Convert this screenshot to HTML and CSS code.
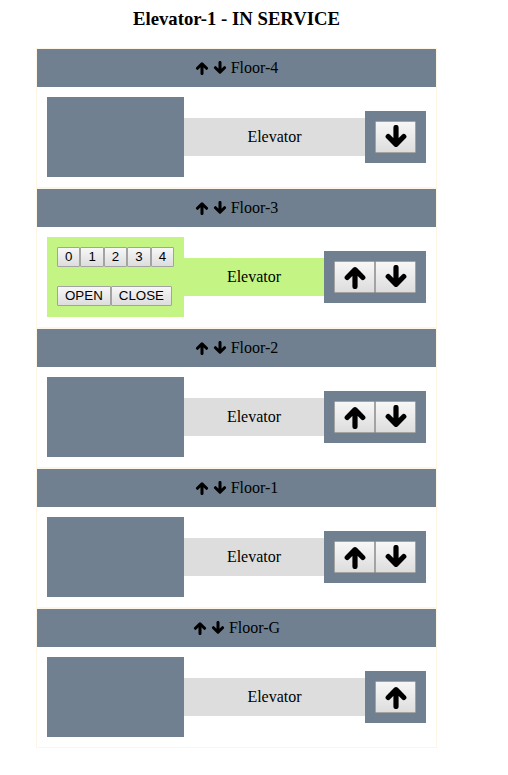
FILE: index.html
```html
<!DOCTYPE html>
<html>
<head>
<meta charset="utf-8">
<link rel="stylesheet" href="styles.css">
</head>
<body>
<svg width="0" height="0" class="defs">
  <defs>
    <symbol id="up" viewBox="0 0 24 24"><path d="M12 21.5V5.5M4.2 12.5L12 4.7L19.8 12.5" fill="none" stroke="#000" stroke-width="5.2" stroke-linecap="round" stroke-linejoin="round"/></symbol>
    <symbol id="down" viewBox="0 0 24 24"><path d="M12 2.5V18.5M4.2 11.5L12 19.3L19.8 11.5" fill="none" stroke="#000" stroke-width="5.2" stroke-linecap="round" stroke-linejoin="round"/></symbol>
  </defs>
</svg>
<div class="wrap">
  <h3 class="title">Elevator-1 - IN SERVICE</h3>

  <div class="floor">
    <div class="floor-head"><svg class="hicon"><use href="#up"/></svg><svg class="hicon"><use href="#down"/></svg> Floor-4</div>
    <div class="floor-body">
      <div class="car"></div>
      <div class="shaft">Elevator</div>
      <div class="calls"><button class="call"><svg class="bicon"><use href="#down"/></svg></button></div>
    </div>
  </div>

  <div class="floor">
    <div class="floor-head"><svg class="hicon"><use href="#up"/></svg><svg class="hicon"><use href="#down"/></svg> Floor-3</div>
    <div class="floor-body">
      <div class="car active">
        <div class="btn-row"><button class="key">0</button><button class="key">1</button><button class="key">2</button><button class="key">3</button><button class="key">4</button></div>
        <div class="btn-row"><button class="key">OPEN</button><button class="key">CLOSE</button></div>
      </div>
      <div class="shaft active">Elevator</div>
      <div class="calls"><button class="call"><svg class="bicon"><use href="#up"/></svg></button><button class="call"><svg class="bicon"><use href="#down"/></svg></button></div>
    </div>
  </div>

  <div class="floor">
    <div class="floor-head"><svg class="hicon"><use href="#up"/></svg><svg class="hicon"><use href="#down"/></svg> Floor-2</div>
    <div class="floor-body">
      <div class="car"></div>
      <div class="shaft">Elevator</div>
      <div class="calls"><button class="call"><svg class="bicon"><use href="#up"/></svg></button><button class="call"><svg class="bicon"><use href="#down"/></svg></button></div>
    </div>
  </div>

  <div class="floor">
    <div class="floor-head"><svg class="hicon"><use href="#up"/></svg><svg class="hicon"><use href="#down"/></svg> Floor-1</div>
    <div class="floor-body">
      <div class="car"></div>
      <div class="shaft">Elevator</div>
      <div class="calls"><button class="call"><svg class="bicon"><use href="#up"/></svg></button><button class="call"><svg class="bicon"><use href="#down"/></svg></button></div>
    </div>
  </div>

  <div class="floor">
    <div class="floor-head"><svg class="hicon"><use href="#up"/></svg><svg class="hicon"><use href="#down"/></svg> Floor-G</div>
    <div class="floor-body">
      <div class="car"></div>
      <div class="shaft">Elevator</div>
      <div class="calls"><button class="call"><svg class="bicon"><use href="#up"/></svg></button></div>
    </div>
  </div>
</div>
</body>
</html>
```

FILE: styles.css
```css
body {
  margin: 8px;
  font-family: "Liberation Serif", "Times New Roman", serif;
  font-size: 16px;
  color: #000;
  background: #fff;
}
.defs { position: absolute; width: 0; height: 0; }
.wrap {
  width: 401px;
  margin-left: 28px;
}
.title {
  margin: 0 0 18px 0;
  font-size: 18.72px;
  line-height: 22px;
  font-weight: bold;
  text-align: center;
}
.floor {
  border: 1px solid #fdf5e6;
}
.floor-head {
  height: 38px;
  background: #708090;
  display: flex;
  align-items: center;
  justify-content: center;
  white-space: pre;
}
.hicon {
  width: 14px;
  height: 14px;
  margin-right: 4px;
}
.hicon + .hicon { margin-right: 0; }
.floor-body {
  display: flex;
  align-items: center;
  padding: 10px;
  height: 80px;
}
.car {
  width: 137px;
  height: 80px;
  background: #708090;
  box-sizing: border-box;
}
.car.active {
  background: #c4f584;
  padding: 10px;
  display: flex;
  flex-direction: column;
  gap: 19px;
}
.btn-row { display: flex; }
.shaft {
  flex: 1;
  height: 38px;
  background: #dddddd;
  display: flex;
  align-items: center;
  justify-content: center;
}
.shaft.active { background: #c4f584; }
.calls {
  background: #708090;
  padding: 10px;
  display: flex;
}
.call, .key {
  margin: 0;
  border: 1px solid #a3a3a3;
  border-radius: 1px;
  background: linear-gradient(#f7f7f7, #dddddd);
  color: #000;
  font-family: "Liberation Sans", Arial, sans-serif;
}
.key {
  height: 20px;
  padding: 0 7px;
  font-size: 13.33px;
  line-height: 18px;
}
.call {
  width: 41px;
  height: 32px;
  padding: 0;
  display: flex;
  align-items: center;
  justify-content: center;
}
.bicon {
  width: 24px;
  height: 24px;
}
```
